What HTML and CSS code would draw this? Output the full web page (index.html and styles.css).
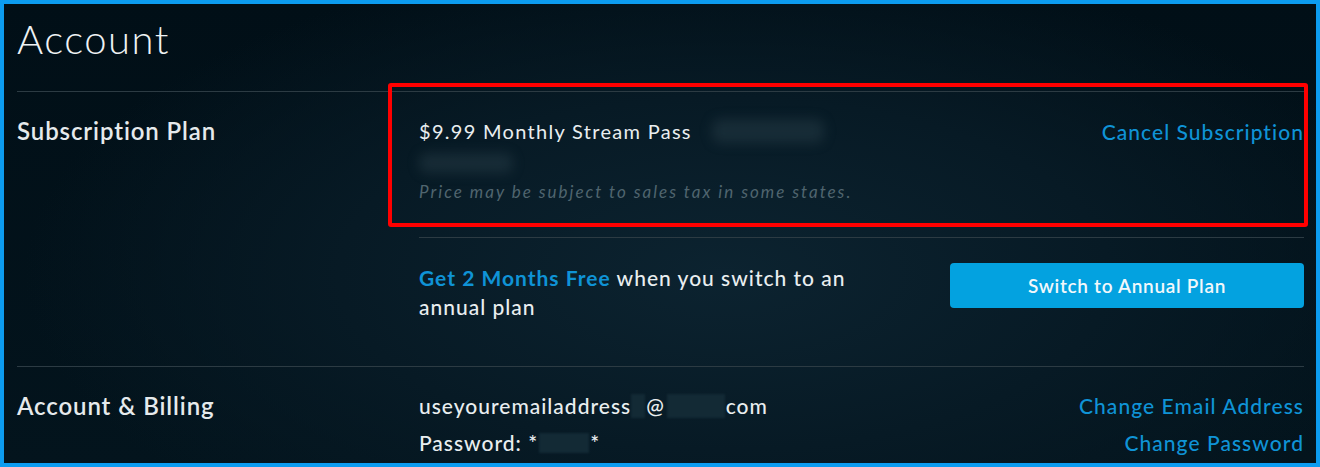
FILE: index.html
```html
<!DOCTYPE html>
<html lang="en">
<head>
<meta charset="utf-8">
<title>Account</title>
<link rel="stylesheet" href="styles.css">
</head>
<body>
<div class="frame">
  <h1 class="title">Account</h1>
  <section class="section">
    <h2 class="label">Subscription Plan</h2>
    <div class="content">
      <div class="plan-row">
        <div class="plan-name">$9.99 Monthly Stream Pass <span class="blur blur-a"></span></div>
        <a class="link" href="#">Cancel Subscription</a>
      </div>
      <div class="blur-line"><span class="blur blur-b"></span></div>
      <p class="note">Price may be subject to sales tax in some states.</p>
      <div class="divider"></div>
      <div class="promo">
        <p class="promo-text"><span class="hl">Get 2 Months Free</span> when you switch to an annual plan</p>
        <button class="btn">Switch to Annual Plan</button>
      </div>
    </div>
  </section>
  <section class="section section-last">
    <h2 class="label">Account &amp; Billing</h2>
    <div class="content">
      <div class="info-row">
        <span class="info">useyouremailaddress<span class="mask mask-s"></span>@<span class="mask mask-m"></span>com</span>
        <a class="link" href="#">Change Email Address</a>
      </div>
      <div class="info-row">
        <span class="info">Password: *<span class="mask mask-p"></span>*</span>
        <a class="link" href="#">Change Password</a>
      </div>
    </div>
  </section>
  <div class="highlight"></div>
</div>
</body>
</html>
```
FILE: styles.css
```css
* { box-sizing: border-box; }
html, body { margin: 0; padding: 0; }
body {
  font-family: Lato, "Open Sans", sans-serif;
  color: #e9eef0;
  background: #03141d;
}
.frame {
  position: relative;
  width: 1320px;
  height: 467px;
  overflow: hidden;
  border: 4px solid #0c9cf0;
  padding: 0 12px 0 13px;
  background:
    radial-gradient(ellipse 700px 320px at 720px 270px, #0c2330 0%, #071a25 55%, rgba(3,18,27,0) 100%),
    linear-gradient(180deg, #010f17 0%, #03141d 100%);
}
.title {
  margin: 0;
  font-weight: 300;
  font-size: 40px;
  line-height: 48px;
  padding-top: 11px;
  height: 87px;
  letter-spacing: 1.5px;
  color: #eef2f4;
}
.section {
  display: grid;
  grid-template-columns: 402px 1fr;
  border-top: 1px solid #2c3b43;
  padding: 24px 0 45px;
}
.section-last {
  padding-top: 20px;
  padding-bottom: 0;
}
.label {
  margin: 0;
  font-size: 24px;
  font-weight: 600;
  line-height: 30px;
  color: #e6eaec;
  letter-spacing: 0.9px;
}
.section-last .label { line-height: 37px; }
.content { display: flex; flex-direction: column; }
.plan-row {
  display: flex;
  justify-content: space-between;
  align-items: center;
  height: 30px;
}
.plan-name {
  font-size: 20px;
  line-height: 30px;
  letter-spacing: 1.3px;
  display: flex;
  align-items: center;
}
.link {
  color: #0f93d6;
  text-decoration: none;
  font-size: 21px;
  font-weight: 500;
  letter-spacing: 1.05px;
}
.blur {
  display: inline-block;
  background: rgba(60, 82, 94, 0.3);
  filter: blur(6px);
  border-radius: 8px;
}
.blur-a { width: 112px; height: 24px; margin-left: 20px; }
.blur-line { height: 34px; display: flex; align-items: center; }
.blur-b { width: 94px; height: 20px; }
.note {
  margin: 0;
  font-style: italic;
  font-size: 17px;
  line-height: 24px;
  color: #50656f;
  letter-spacing: 2px;
}
.divider {
  height: 1px;
  background: #2c3b43;
  margin-top: 33px;
  margin-bottom: 25px;
}
.promo {
  display: flex;
  justify-content: space-between;
  align-items: flex-start;
}
.promo-text {
  margin: 0;
  width: 450px;
  font-size: 21px;
  line-height: 29px;
  font-weight: 500;
  letter-spacing: 1px;
}
.hl { color: #0f93d6; font-weight: 700; }
.btn {
  width: 354px;
  height: 45px;
  border: 0;
  border-radius: 4px;
  background: #03a2e0;
  color: #f2f8fb;
  font-family: Lato, "Open Sans", sans-serif;
  font-size: 19px;
  font-weight: 600;
  letter-spacing: 0.7px;
}
.info-row {
  display: flex;
  justify-content: space-between;
  align-items: center;
  height: 37px;
}
.info {
  font-size: 21px;
  font-weight: 500;
  letter-spacing: 1px;
  display: flex;
  align-items: center;
}
.mask {
  display: inline-block;
  height: 24px;
  background: #132a35;
  filter: blur(1px);
}
.mask-s { width: 14px; margin: 0 1px 0 0; }
.mask-m { width: 58px; margin: 0 1px 0 2px; }
.mask-p { width: 50px; margin: 0 1px; height: 20px; }
.highlight {
  position: absolute;
  left: 384px;
  top: 79px;
  width: 920px;
  height: 144px;
  border: 4px solid #ff0000;
  border-radius: 3px;
  pointer-events: none;
}
```
